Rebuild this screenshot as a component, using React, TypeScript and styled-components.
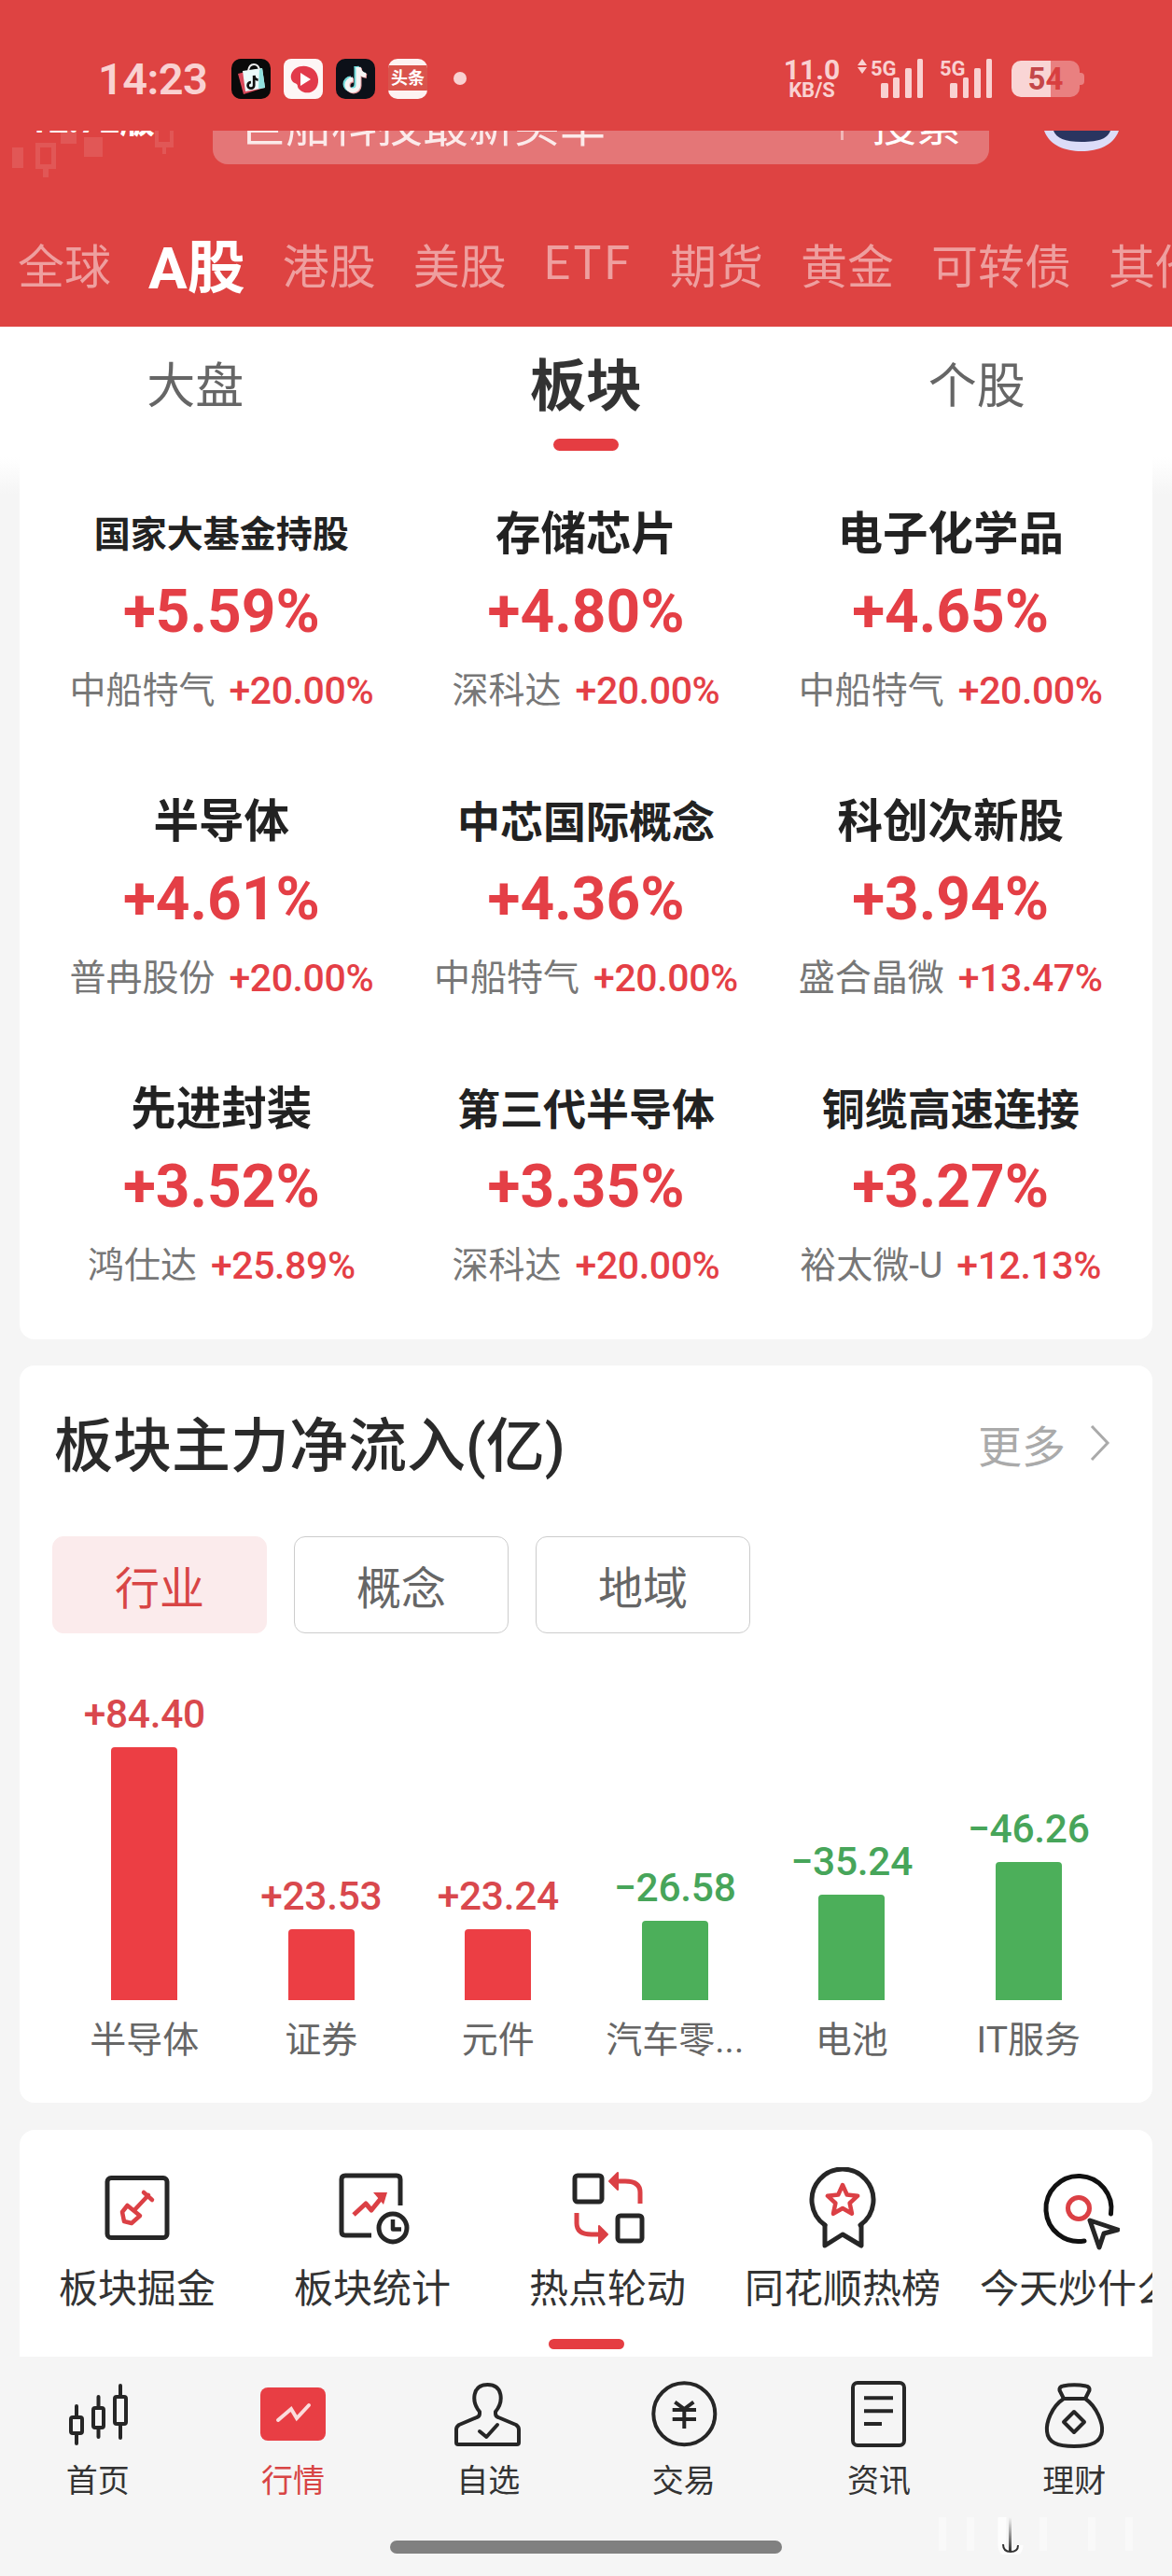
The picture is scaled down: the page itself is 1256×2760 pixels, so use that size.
import React from "react";
import styled, { createGlobalStyle } from "styled-components";

const Global = createGlobalStyle`
  html, body { margin: 0; padding: 0; background: #f5f5f5; }
  body { font-family: Roboto, "Noto Sans CJK SC", sans-serif; }
  * { box-sizing: border-box; }
`;

const Page = styled.div`
  width: 1256px;
  height: 2760px;
  overflow: hidden;
  position: relative;
  display: flex;
  flex-direction: column;
  background: #f5f5f5;
`;

/* ---------- red header ---------- */
const Header = styled.header`
  height: 350px;
  flex: none;
  background: #de4342;
  display: flex;
  flex-direction: column;
`;
const StatusBar = styled.div`
  height: 140px;
  flex: none;
  padding: 28px 94px 0 105px;
  display: flex;
  align-items: center;
  color: #f9d1d1;
`;
const Clock = styled.span`
  width: 113px;
  font-size: 47px;
  font-weight: 600;
  letter-spacing: -0.6px;
  white-space: nowrap;
`;
const AppTiles = styled.div`
  margin-left: 30px;
  display: flex;
  gap: 14px;
`;
const Tile = styled.svg`
  width: 42px;
  height: 43px;
  display: block;
`;
const NewsTile = styled.div`
  width: 42px;
  height: 43px;
  border-radius: 10px;
  background: #fdf2f2;
  display: flex;
  align-items: center;
  overflow: hidden;
`;
const NewsBand = styled.span`
  width: 100%;
  height: 27px;
  margin-top: -2px;
  background: #d9534c;
  color: #fff;
  font-size: 18px;
  line-height: 27px;
  font-weight: 700;
  text-align: center;
  white-space: nowrap;
`;
const NotifyDot = styled.span`
  margin-left: 28px;
  width: 14px;
  height: 14px;
  border-radius: 50%;
  background: #f9d1d1;
`;
const StatusRight = styled.div`
  margin-left: auto;
  display: flex;
  align-items: center;
`;
const NetSpeed = styled.div`
  width: 58px;
  display: flex;
  flex-direction: column;
  align-items: center;
  font-weight: 700;
  color: #f9d1d1;
`;
const NetValue = styled.span`
  font-size: 30px;
  line-height: 24px;
`;
const NetUnit = styled.span`
  font-size: 22px;
  line-height: 19px;
`;
const Signal = styled.svg<{ $ml: number }>`
  margin-left: ${(p) => p.$ml}px;
  height: 44px;
  display: block;
  flex: none;
`;
const Battery = styled.div`
  position: relative;
  margin-left: 21px;
  margin-right: 5px;
  width: 73px;
  height: 39px;
  border-radius: 10px;
  background: linear-gradient(90deg, #f9d5d5 58%, #e98080 58%);
  text-align: center;
  font-size: 33px;
  line-height: 39px;
  font-weight: 700;
  color: #c4474a;
  &::after {
    content: "";
    position: absolute;
    right: -5px;
    top: 13px;
    width: 5px;
    height: 13px;
    border-radius: 0 4px 4px 0;
    background: #e98080;
  }
`;
const BatteryRest = styled.span`
  color: #d83f40;
`;

const TopRow = styled.div`
  height: 60px;
  flex: none;
  overflow: hidden;
  display: flex;
  align-items: flex-start;
`;
const LogoBlock = styled.div`
  position: relative;
  width: 228px;
  height: 60px;
  flex: none;
`;
const Candles = styled.svg`
  position: absolute;
  left: 0;
  top: 0;
  width: 200px;
  height: 60px;
`;
const LogoText = styled.div`
  position: relative;
  margin-top: -36px;
  margin-left: 30px;
  font-size: 38px;
  line-height: 50px;
  font-weight: 700;
  color: #fff;
  white-space: nowrap;
`;
const SearchBar = styled.div`
  width: 832px;
  height: 86px;
  margin-top: -50px;
  flex: none;
  padding: 0 30px 6px 29px;
  border-radius: 16px;
  background: #e47677;
  display: flex;
  align-items: center;
  color: #fbeaea;
  font-size: 49px;
  white-space: nowrap;
`;
const SearchText = styled.span`
  flex: 1;
`;
const SearchDivider = styled.span`
  width: 3px;
  height: 40px;
  background: #f0b6b6;
`;
const SearchButton = styled.span`
  margin-left: 30px;
  font-size: 48px;
  color: #fff;
`;
const Avatar = styled.svg`
  margin-left: 59px;
  width: 82px;
  height: 26px;
  flex: none;
`;

const MarketTabs = styled.nav`
  flex: 1;
  padding: 14px 0 0 19px;
  display: flex;
  align-items: center;
  gap: 40px;
  overflow: hidden;
`;
const MarketTab = styled.span<{ $active?: boolean; $latin?: boolean }>`
  flex: none;
  white-space: nowrap;
  color: ${(p) => (p.$active ? "#fff" : "#ee9f9f")};
  font-size: ${(p) => (p.$active ? 62 : 50)}px;
  font-weight: ${(p) => (p.$active ? 700 : 400)};
  letter-spacing: ${(p) => (p.$latin ? 3 : 0)}px;
`;

/* ---------- sub tabs ---------- */
const SubTabs = styled.div`
  height: 140px;
  flex: none;
  background: #fff;
  display: grid;
  grid-template-columns: repeat(3, 1fr);
`;
const SubTab = styled.div<{ $active?: boolean }>`
  padding-top: 30px;
  display: flex;
  flex-direction: column;
  align-items: center;
  font-size: ${(p) => (p.$active ? 60 : 52)}px;
  line-height: 70px;
  font-weight: ${(p) => (p.$active ? 700 : 400)};
  color: ${(p) => (p.$active ? "#333" : "#666")};
`;
const SubBar = styled.span`
  margin-top: 20px;
  width: 70px;
  height: 13px;
  border-radius: 7px;
  background: #e53d42;
`;

/* ---------- body ---------- */
const Body = styled.main`
  flex: none;
  padding: 0 21px;
  background: linear-gradient(#fff, #f5f5f5 40px);
  display: flex;
  flex-direction: column;
`;
const SectorCard = styled.section`
  height: 945px;
  padding: 53px 21px 54px;
  background: #fff;
  border-radius: 0 0 16px 16px;
  display: grid;
  grid-template-columns: repeat(3, 1fr);
  grid-auto-rows: 222px;
  row-gap: 86px;
`;
const Sector = styled.div`
  display: flex;
  flex-direction: column;
  align-items: center;
`;
const SectorName = styled.div<{ $size: number }>`
  height: 60px;
  line-height: 60px;
  font-size: ${(p) => p.$size}px;
  font-weight: 700;
  color: #222;
  white-space: nowrap;
`;
const SectorPct = styled.div`
  margin-top: 13px;
  height: 80px;
  line-height: 80px;
  font-size: 64px;
  font-weight: 700;
  color: #e43f46;
`;
const SectorLead = styled.div`
  margin-top: 19px;
  height: 50px;
  line-height: 50px;
  display: flex;
  gap: 15px;
  white-space: nowrap;
`;
const LeadName = styled.span`
  font-size: 39px;
  color: #777;
`;
const LeadPct = styled.span`
  font-size: 41px;
  font-weight: 500;
  letter-spacing: -0.4px;
  color: #e43f46;
`;

const FlowCard = styled.section`
  margin-top: 28px;
  height: 790px;
  padding: 57px 0 0;
  background: #fff;
  border-radius: 16px;
`;
const FlowHead = styled.div`
  height: 60px;
  padding: 0 45px 0 37px;
  display: flex;
  align-items: center;
  justify-content: space-between;
`;
const FlowTitle = styled.h2`
  margin: 0;
  font-size: 63px;
  line-height: 60px;
  font-weight: 500;
  color: #2a2a2a;
  white-space: nowrap;
`;
const MoreLink = styled.div`
  margin-top: -8px;
  display: flex;
  align-items: center;
  gap: 25px;
  font-size: 47px;
  color: #aaa;
`;
const Chevron = styled.svg`
  width: 23px;
  height: 40px;
  display: block;
`;
const FlowTabs = styled.div`
  margin: 66px 0 0 35px;
  display: flex;
  gap: 29px;
`;
const FlowTab = styled.div<{ $active?: boolean }>`
  width: 230px;
  height: 104px;
  border-radius: 12px;
  border: 1px solid ${(p) => (p.$active ? "#fbebec" : "#ccc")};
  background: ${(p) => (p.$active ? "#fbebec" : "#fff")};
  color: ${(p) => (p.$active ? "#d84545" : "#666")};
  font-size: 48px;
  display: flex;
  align-items: center;
  justify-content: center;
`;
const Chart = styled.div`
  margin-top: 62px;
  padding: 0 38px 0 39px;
  display: grid;
  grid-template-columns: repeat(6, 1fr);
  align-items: end;
`;
const ChartCol = styled.div`
  display: flex;
  flex-direction: column;
  align-items: center;
`;
const ChartValue = styled.span<{ $up: boolean }>`
  height: 50px;
  line-height: 50px;
  margin-bottom: 10px;
  font-size: 42.5px;
  font-weight: 500;
  letter-spacing: -0.3px;
  white-space: nowrap;
  color: ${(p) => (p.$up ? "#d9484d" : "#47a55a")};
`;
const ChartBar = styled.div<{ $up: boolean; $h: number }>`
  width: 71px;
  height: ${(p) => p.$h}px;
  border-radius: 4px 4px 0 0;
  background: ${(p) => (p.$up ? "#ec3e44" : "#4caf5a")};
`;
const ChartLabel = styled.span`
  margin-top: 18px;
  height: 50px;
  line-height: 50px;
  font-size: 39px;
  color: #666;
  white-space: nowrap;
`;

const ToolCard = styled.section`
  margin-top: 29px;
  height: 243px;
  padding-top: 40px;
  background: #fff;
  border-radius: 16px 16px 0 0;
  overflow: hidden;
  display: flex;
  flex-direction: column;
`;
const ToolRow = styled.div`
  display: flex;
`;
const ToolItem = styled.div`
  flex: none;
  width: 252px;
  display: flex;
  flex-direction: column;
  align-items: center;
`;
const ToolIcon = styled.svg`
  width: 90px;
  height: 90px;
  display: block;
`;
const ToolLabel = styled.span`
  margin-top: 11px;
  height: 60px;
  line-height: 60px;
  font-size: 42px;
  color: #333;
  white-space: nowrap;
`;
const ToolBar = styled.span`
  align-self: center;
  margin-top: 23px;
  width: 81px;
  height: 11px;
  flex: none;
  border-radius: 6px;
  background: #e53d42;
`;

/* ---------- bottom nav ---------- */
const BottomNav = styled.footer`
  flex: 1;
  position: relative;
  padding-top: 24px;
  display: flex;
  flex-direction: column;
  background: #f5f5f5;
`;
const NavGrid = styled.div`
  display: grid;
  grid-template-columns: repeat(6, 1fr);
`;
const NavItem = styled.div<{ $active?: boolean }>`
  display: flex;
  flex-direction: column;
  align-items: center;
  font-size: 34px;
  line-height: 44px;
  color: ${(p) => (p.$active ? "#d84545" : "#333")};
`;
const NavIcon = styled.svg`
  width: 80px;
  height: 80px;
  margin-bottom: 7px;
  display: block;
`;
const HomeIndicator = styled.span`
  align-self: center;
  margin-top: 42px;
  width: 420px;
  height: 14px;
  border-radius: 7px;
  background: #808080;
`;
const Watermark = styled.svg`
  position: absolute;
  left: 1000px;
  top: 170px;
  width: 230px;
  height: 42px;
`;

/* ---------- data ---------- */
const sectors = [
  { name: "国家大基金持股", size: 39, pct: "+5.59%", lead: "中船特气", leadPct: "+20.00%" },
  { name: "存储芯片", size: 48.5, pct: "+4.80%", lead: "深科达", leadPct: "+20.00%" },
  { name: "电子化学品", size: 48.5, pct: "+4.65%", lead: "中船特气", leadPct: "+20.00%" },
  { name: "半导体", size: 48.5, pct: "+4.61%", lead: "普冉股份", leadPct: "+20.00%" },
  { name: "中芯国际概念", size: 46, pct: "+4.36%", lead: "中船特气", leadPct: "+20.00%" },
  { name: "科创次新股", size: 48.5, pct: "+3.94%", lead: "盛合晶微", leadPct: "+13.47%" },
  { name: "先进封装", size: 48.5, pct: "+3.52%", lead: "鸿仕达", leadPct: "+25.89%" },
  { name: "第三代半导体", size: 46, pct: "+3.35%", lead: "深科达", leadPct: "+20.00%" },
  { name: "铜缆高速连接", size: 46, pct: "+3.27%", lead: "裕太微-U", leadPct: "+12.13%" },
];
const flows = [
  { v: "+84.40", h: 271, label: "半导体", up: true },
  { v: "+23.53", h: 76, label: "证券", up: true },
  { v: "+23.24", h: 76, label: "元件", up: true },
  { v: "−26.58", h: 85, label: "汽车零...", up: false },
  { v: "−35.24", h: 113, label: "电池", up: false },
  { v: "−46.26", h: 148, label: "IT服务", up: false },
];
const marketTabs = ["全球", "A股", "港股", "美股", "ETF", "期货", "黄金", "可转债", "其他"];

const DARK = "#262626";
const RED = "#db4045";

const Note = ({ c, dx, dy }: { c: string; dx: number; dy: number }) => (
  <g transform={`translate(${dx} ${dy})`} fill="none" stroke={c} strokeWidth="5">
    <path d="M24 9V28a6 6 0 1 1-6-6" />
    <path d="M24 9c.6 5 3.4 8 8 8.5" />
  </g>
);

const toolIcons = [
  <g key="a" fill="none" strokeLinejoin="round">
    <rect x="13" y="11.5" width="64" height="64" rx="4" stroke={DARK} strokeWidth="5" />
    <g stroke={RED} strokeWidth="4.5" strokeLinecap="round">
      <path d="M34.5 41 48 52 39 60 31 58 29 48Z" />
      <path d="M42 46 57 30M52 27l9 8" />
    </g>
  </g>,
  <g key="b" fill="none" strokeLinejoin="round">
    <path d="M75 41V13q0-4-4-4H16q-4 0-4 4V69q0 4 4 4H44" stroke={DARK} strokeWidth="5" />
    <path d="M25 51 38 39l6 7 13-16" stroke={RED} strokeWidth="5" />
    <path d="M46 27H61L57 40Z" fill={RED} />
    <circle cx="67" cy="65" r="15" stroke={DARK} strokeWidth="5" />
    <path d="M67 56V66.500H76" stroke={DARK} strokeWidth="4.500" />
  </g>,
  <g key="c" fill="none" strokeLinejoin="round">
    <rect x="10" y="9" width="29" height="28" rx="3" stroke={DARK} strokeWidth="5" />
    <rect x="56" y="52" width="26" height="27" rx="3" stroke={DARK} strokeWidth="5" />
    <path d="M80 39V27Q80 15 64 15H54" stroke={RED} strokeWidth="5" />
    <path d="M56 6 47 15l9 9Z" fill={RED} stroke={RED} strokeWidth="2" />
    <path d="M12 49V60Q12 72 28 72H38" stroke={RED} strokeWidth="5" />
    <path d="M36 63 45 72l-9 9Z" fill={RED} stroke={RED} strokeWidth="2" />
  </g>,
  <g key="d" fill="none" strokeLinejoin="round" strokeLinecap="round">
    <path d="M26 62A33 33 0 1 1 64 62" stroke={DARK} strokeWidth="5" />
    <path d="M26 62V84L45 72 65 84V62" stroke={DARK} strokeWidth="5" />
    <path
      d="M45 19 49.700 29.500 61.200 30.700 52.600 38.500 55 49.800 45 44 35 49.800 37.400 38.500 28.800 30.700 40.300 29.500Z"
      stroke={RED}
      strokeWidth="4.500"
    />
  </g>,
  <g key="e" fill="none" strokeLinejoin="round" strokeLinecap="round">
    <path d="M80.500 50A35 35 0 1 0 52 79" stroke="#111" strokeWidth="5" />
    <circle cx="46" cy="44" r="11.500" stroke={RED} strokeWidth="5" />
    <path d="M58 57 88 67 73 71 68 86Z" stroke={DARK} strokeWidth="5" />
  </g>,
];
const toolLabels = ["板块掘金", "板块统计", "热点轮动", "同花顺热榜", "今天炒什么"];

const navIcons = [
  <g key="a" fill="none" stroke={DARK} strokeWidth="4">
    <rect x="11" y="41" width="12" height="17" rx="2" />
    <path d="M17 29V39M17 60V69" strokeLinecap="round" />
    <rect x="35" y="31" width="11" height="21" rx="2" />
    <path d="M40.500 19V29M40.500 54V62" strokeLinecap="round" />
    <rect x="58" y="19" width="12" height="29" rx="2" />
    <path d="M64 7V17M64 50V63" strokeLinecap="round" />
  </g>,
  <g key="b">
    <rect x="5" y="9" width="70" height="57" rx="8" fill="#e83e44" />
    <path d="M24 44 38 32 44 42 57 28" fill="none" stroke="#fbdcdc" strokeWidth="4" strokeLinecap="round" />
  </g>,
  <g key="c" fill="none" stroke={DARK} strokeWidth="4" strokeLinejoin="round">
    <path d="M31 35C22 24 23 6 39.500 6 56 6 57 24 48 35V37Q48 40 51 41L70 49Q73 51 73 54V68Q73 70 71 70H8Q6 70 6 68V54Q6 51 9 49L28 41Q31 40 31 37Z" />
    <path d="M31 56 38.300 62 50 49" strokeLinecap="round" />
  </g>,
  <g key="d" fill="none" stroke={DARK} strokeWidth="4">
    <circle cx="40.300" cy="37.300" r="33" />
    <path d="M30.300 24.700 40.300 32 50.300 24.700M27.700 33H53M27.700 43H53M40.300 32V53" />
  </g>,
  <g key="e" fill="none" stroke={DARK} strokeWidth="4">
    <rect x="12" y="4" width="55" height="67" rx="5" />
    <path d="M24 20.300H55M24 34.300H55M24 48H43" />
  </g>,
  <g key="f" fill="none" stroke={DARK} strokeWidth="4" strokeLinejoin="round">
    <path d="M29 21C15 30 10 48 11 56 12 68 22 72 40 72 58 72 69 68 70 56 71 48 65 30 52 21Z" />
    <path d="M29 21 24.500 12Q24 8 28 7.500 40 5 53 7.500 57 8 56.500 12L52 21" />
    <path d="M40 35 51 46 40 57 29 46Z" />
  </g>,
];
const navLabels = ["首页", "行情", "自选", "交易", "资讯", "理财"];

export default function App() {
  return (
    <Page>
      <Global />
      <Header>
        <StatusBar>
          <Clock>14:23</Clock>
          <AppTiles>
            <Tile viewBox="0 0 42 43">
              <rect width="42" height="43" rx="10" fill="#0a0a0a" />
              <path d="M7 16 13 38 32 32 27 11Z" fill="#d9495a" />
              <path d="M12 13 33 10 36 31 15 35Z" fill="#ecfafa" />
              <path d="M30 11 33 10 36 31 29 32Z" fill="#8fe3e0" />
              <path d="M18 13q1-7 6-7t6 6" fill="none" stroke="#eee" strokeWidth="2" />
              <g transform="translate(11 13) scale(.55)">
                <Note c="#111" dx={0} dy={0} />
              </g>
            </Tile>
            <Tile viewBox="0 0 42 43">
              <rect width="42" height="43" rx="8" fill="#fdf6f6" />
              <path d="M8 17C12 3 36 5 37 22 38 36 24 40 17 33 13 29 17 28 12 26 9 25 7 21 8 17Z" fill="#e23a4b" />
              <path d="M18 15 29 22 18 29Z" fill="#fff" />
            </Tile>
            <Tile viewBox="0 0 42 43">
              <rect width="42" height="43" rx="10" fill="#0c1018" />
              <Note c="#71dcdc" dx={-2} dy={-1} />
              <Note c="#e89a9e" dx={1} dy={1} />
              <Note c="#f5f5f5" dx={0} dy={0} />
            </Tile>
            <NewsTile>
              <NewsBand>头条</NewsBand>
            </NewsTile>
          </AppTiles>
          <NotifyDot />
          <StatusRight>
            <NetSpeed>
              <NetValue>11.0</NetValue>
              <NetUnit>KB/S</NetUnit>
            </NetSpeed>
            <Signal $ml={20} width="71" viewBox="0 0 71 44" fill="#f9d1d1">
              <path d="M5 1 10 8H0ZM0 10H10L5 17Z" />
              <text x="14" y="19" fontSize="22" fontWeight="700" fontFamily="Roboto">5G</text>
              <rect x="25" y="27" width="8" height="16" rx="1.500" />
              <rect x="38" y="21" width="7" height="22" rx="1.500" />
              <rect x="51" y="11" width="7" height="32" rx="1.500" />
              <rect x="64" y="1" width="6" height="42" rx="1.500" />
            </Signal>
            <Signal $ml={17} width="56" viewBox="0 0 56 44" fill="#f9d1d1">
              <text x="0" y="19" fontSize="22" fontWeight="700" fontFamily="Roboto">5G</text>
              <rect x="11" y="27" width="8" height="16" rx="1.500" />
              <rect x="25" y="21" width="6" height="22" rx="1.500" />
              <rect x="37" y="11" width="7" height="32" rx="1.500" />
              <rect x="50" y="1" width="6" height="42" rx="1.500" />
            </Signal>
            <Battery>
              5<BatteryRest>4</BatteryRest>
            </Battery>
          </StatusRight>
        </StatusBar>
        <TopRow>
          <LogoBlock>
            <Candles viewBox="0 0 200 60" fill="#fff" fillOpacity=".11">
              <rect x="13" y="18" width="12" height="22" />
              <path d="M38 13H60V41H52V50H46V41H38ZM43 18V36H55V18Z" fillRule="evenodd" />
              <rect x="65" y="0" width="17" height="14" />
              <rect x="90" y="7" width="20" height="21" />
              <path d="M166 0H170V12H182V0H186V18H178V25H174V18H166Z" />
            </Candles>
            <LogoText>12.72版</LogoText>
          </LogoBlock>
          <SearchBar>
            <SearchText>巨船科技最新买单</SearchText>
            <SearchDivider />
            <SearchButton>搜索</SearchButton>
          </SearchBar>
          <Avatar viewBox="0 0 82 26">
            <path d="M0 0H80C74 16 58 22 40 22 22 22 6 16 0 0Z" fill="#dcdcf8" />
            <path d="M10 0H71C68 8 60 12 40 12 22 12 13 8 10 0Z" fill="#2a3560" />
          </Avatar>
        </TopRow>
        <MarketTabs>
          {marketTabs.map((t) => (
            <MarketTab key={t} $active={t === "A股"} $latin={t === "ETF"}>{t}</MarketTab>
          ))}
        </MarketTabs>
      </Header>

      <SubTabs>
        <SubTab>大盘</SubTab>
        <SubTab $active>
          板块
          <SubBar />
        </SubTab>
        <SubTab>个股</SubTab>
      </SubTabs>

      <Body>
        <SectorCard>
          {sectors.map((s) => (
            <Sector key={s.name}>
              <SectorName $size={s.size}>{s.name}</SectorName>
              <SectorPct>{s.pct}</SectorPct>
              <SectorLead>
                <LeadName>{s.lead}</LeadName>
                <LeadPct>{s.leadPct}</LeadPct>
              </SectorLead>
            </Sector>
          ))}
        </SectorCard>

        <FlowCard>
          <FlowHead>
            <FlowTitle>板块主力净流入(亿)</FlowTitle>
            <MoreLink>
              更多
              <Chevron viewBox="0 0 23 40" fill="none" stroke="#aaa" strokeWidth="3">
                <path d="M3 2 20 20 3 38" />
              </Chevron>
            </MoreLink>
          </FlowHead>
          <FlowTabs>
            <FlowTab $active>行业</FlowTab>
            <FlowTab>概念</FlowTab>
            <FlowTab>地域</FlowTab>
          </FlowTabs>
          <Chart>
            {flows.map((f) => (
              <ChartCol key={f.label}>
                <ChartValue $up={f.up}>{f.v}</ChartValue>
                <ChartBar $up={f.up} $h={f.h} />
                <ChartLabel>{f.label}</ChartLabel>
              </ChartCol>
            ))}
          </Chart>
        </FlowCard>

        <ToolCard>
          <ToolRow>
            {toolLabels.map((l, i) => (
              <ToolItem key={l}>
                <ToolIcon viewBox="0 0 90 90">{toolIcons[i]}</ToolIcon>
                <ToolLabel>{l}</ToolLabel>
              </ToolItem>
            ))}
          </ToolRow>
          <ToolBar />
        </ToolCard>
      </Body>

      <BottomNav>
        <NavGrid>
          {navLabels.map((l, i) => (
            <NavItem key={l} $active={i === 1}>
              <NavIcon viewBox="0 0 80 80">{navIcons[i]}</NavIcon>
              {l}
            </NavItem>
          ))}
        </NavGrid>
        <HomeIndicator />
        <Watermark viewBox="0 0 230 42" fill="none">
          <defs>
            <linearGradient id="wmFade" x1="0" y1="0" x2="0" y2="1">
              <stop offset="0" stopColor="#444" stopOpacity="0" />
              <stop offset="1" stopColor="#333" />
            </linearGradient>
          </defs>
          <path d="M10 2V38M40 2V38M118 2V38M170 2V38M210 2V38" stroke="#fff" strokeWidth="8" strokeOpacity=".45" />
          <path d="M74 2V32Q74 40 83 40 92 40 92 32" stroke="#fff" strokeWidth="9" strokeOpacity=".8" />
          <rect x="81" y="2" width="3" height="36" fill="url(#wmFade)" />
          <path d="M75 31Q75 39 83 39 91 39 91 32" stroke="#333" strokeWidth="2" />
        </Watermark>
      </BottomNav>
    </Page>
  );
}
